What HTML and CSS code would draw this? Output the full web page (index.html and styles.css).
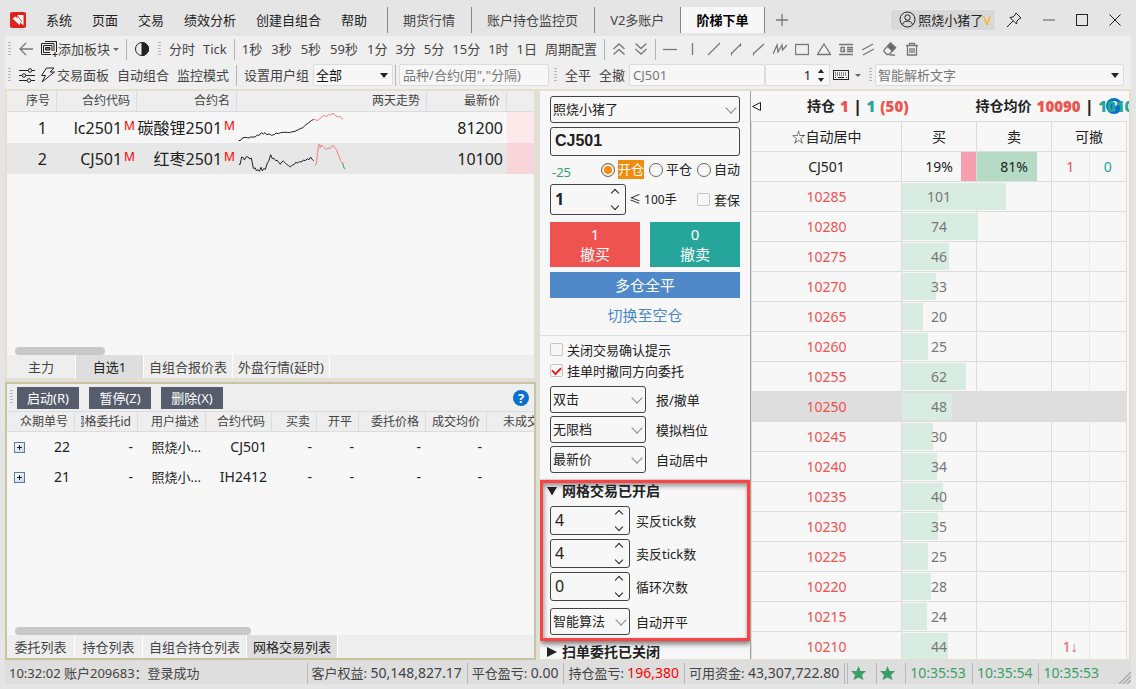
FILE: index.html
```html
<!DOCTYPE html>
<html lang="zh-CN">
<head>
<meta charset="utf-8">
<title>阶梯下单</title>
<link rel="stylesheet" href="styles.css">
</head>
<body>
<header class="titlebar">
  <svg class="logo" viewBox="0 0 16 16"><rect width="16" height="16" rx="2" fill="#e0221c"/><path d="M2.500 6.500L5.500 4.500L7.800 6.800L7 3H13.500V13.500L10.500 10.500L9.500 13z" fill="#fff"/><path d="M7 3L12 10" stroke="#e0221c" stroke-width=".8"/></svg>
  <nav class="menu">
    <button>系统</button><button>页面</button><button>交易</button><button>绩效分析</button><button>创建自组合</button><button>帮助</button>
  </nav>
  <nav class="pages">
    <button>期货行情</button><button>账户持仓监控页</button><button>V2多账户</button><button class="active">阶梯下单</button>
  </nav>
  <button class="icon-btn" aria-label="新增页面"><svg width="12" height="12" viewBox="0 0 12 12" class="line"><path d="M6 0V12M0 6H12"/></svg></button>
  <div class="win">
    <button class="user"><svg width="17" height="17" viewBox="0 0 17 17" class="line dark"><circle cx="8.500" cy="8.500" r="7.500"/><circle cx="8.500" cy="6.500" r="2.700"/><path d="M3.500 13.500C4.500 9 12.500 9 13.500 13.500"/></svg>照烧小猪了<b>V</b></button>
    <button class="icon-btn" aria-label="固定"><svg width="16" height="16" viewBox="0 0 16 16" class="line dark"><path d="M10 1L15 6L13 7L11 9L10.500 12L4 5.500L7 5L9 3zM7 9L1 15"/></svg></button>
    <button class="icon-btn" aria-label="最小化"><svg width="12" height="12" viewBox="0 0 12 12" class="line"><path d="M0 6H12"/></svg></button>
    <button class="icon-btn" aria-label="最大化"><svg width="12" height="12" viewBox="0 0 12 12" class="line dark"><rect x=".5" y=".5" width="11" height="11"/></svg></button>
    <button class="icon-btn" aria-label="关闭"><svg width="12" height="12" viewBox="0 0 12 12" class="line dark"><path d="M.5.5L11.500 11.500M11.500.5L.5 11.500"/></svg></button>
  </div>
</header>

<section class="toolbars">
  <div class="bar">
    <i class="grip"></i>
    <button aria-label="返回"><svg width="14" height="14" viewBox="0 0 14 14" class="line"><path d="M14 7H1M7 1L1 7L7 13"/></svg></button>
    <button class="with-icon"><svg width="17" height="16" viewBox="0 0 17 16" class="line dark"><path d="M4 .5H15.500V11M.5 13V2.500H13V10M.5 13.500H10M2.500 4.500H11V10M2.500 4.500V11.500H9M14 11V16M11.500 13.500H16.500"/><path d="M4.500 6.500H9V9H4.500z" fill="#777"/></svg>添加板块<span class="tri"></span></button>
    <i class="sep"></i>
    <button class="contrast" aria-label="切换主题"><svg width="14" height="14" viewBox="0 0 14 14" class="line dark"><circle cx="7" cy="7" r="6.500"/><path d="M7 .5A6.500 6.500 0 0 1 7 13.500z" fill="#222"/></svg></button>
    <i class="grip"></i>
    <button>分时</button><button>Tick</button>
    <i class="sep"></i>
    <div class="seconds"><button>1秒</button><button>3秒</button><button>5秒</button><button>59秒</button></div>
    <button>1分</button><button>3分</button><button>5分</button><button>15分</button><button>1时</button><button>1日</button><button>周期配置</button>
    <i class="sep"></i>
    <button aria-label="上移"><svg width="14" height="14" viewBox="0 0 14 14" class="line"><path d="M1.500 7L7 2L12.500 7M1.500 12.500L7 7.500L12.500 12.500"/></svg></button>
    <button aria-label="下移"><svg width="14" height="14" viewBox="0 0 14 14" class="line"><path d="M1.500 1.500L7 6.500L12.500 1.500M1.500 7L7 12L12.500 7"/></svg></button>
    <i class="sep"></i>
    <button aria-label="水平线"><svg width="14" height="14" viewBox="0 0 14 14" class="line"><path d="M0 7.500H14"/></svg></button>
    <button aria-label="垂直线"><svg width="14" height="14" viewBox="0 0 14 14" class="line"><path d="M7.500 1V13"/></svg></button>
    <button aria-label="直线"><svg width="14" height="14" viewBox="0 0 14 14" class="line"><path d="M1 13L13 1"/></svg></button>
    <button aria-label="线段"><svg width="14" height="14" viewBox="0 0 14 14" class="line"><path d="M2 12L12 2"/><path d="M2 12h1M11 3h1" stroke-width="3"/></svg></button>
    <button aria-label="射线"><svg width="14" height="14" viewBox="0 0 14 14" class="line"><path d="M2 12L13 2"/><path d="M2 12h1" stroke-width="3"/></svg></button>
    <button aria-label="波浪线"><svg width="14" height="14" viewBox="0 0 14 14" class="line"><path d="M0 12L4 3L5 10L9 3L9.500 8L14 3"/></svg></button>
    <button aria-label="矩形"><svg width="14" height="14" viewBox="0 0 14 14" class="line"><rect x=".5" y="2.500" width="13" height="10"/></svg></button>
    <button aria-label="三角形"><svg width="14" height="14" viewBox="0 0 14 14" class="line"><path d="M7 2L13.500 12.500H.5z"/></svg></button>
    <button aria-label="黄金分割"><svg width="14" height="14" viewBox="0 0 14 14" class="line"><path d="M0 2.500H14M0 12.500H14M8 5.500H14M8 7.500H14M8 9.500H14M6 5.500H2V9.500H5.500V7.500H4"/></svg></button>
    <button aria-label="平行线"><svg width="14" height="14" viewBox="0 0 14 14" class="line"><path d="M1 8L12 2M2 13L13 7"/></svg></button>
    <button aria-label="橡皮"><svg width="14" height="14" viewBox="0 0 14 14" class="line"><path d="M7.500 1L12.500 5.500L6 12.500H4L1 9.500V8zM7 13H12"/><path d="M7.500 1L12.500 5.500L9.500 9L4.500 4.500z" fill="#666"/></svg></button>
    <button aria-label="删除图形"><svg width="14" height="14" viewBox="0 0 14 14" class="line"><path d="M1 3.500H13M4.500 3V1.500H9.500V3M2.500 4V13H11.500V4M5 6V11M7 6V11M9 6V11"/></svg></button>
  </div>
  <div class="bar">
    <i class="grip"></i>
    <button class="tune" aria-label="设置"><svg width="16" height="15" viewBox="0 0 16 15" class="line dark"><path d="M0 2.500H9M13 2.500H16M0 7.500H3M7 7.500H16M0 12.500H8M12 12.500H16"/><circle cx="11" cy="2.500" r="1.800"/><circle cx="5" cy="7.500" r="1.800"/><circle cx="10" cy="12.500" r="1.800"/></svg></button>
    <button class="with-icon"><svg width="17" height="16" viewBox="0 0 17 16" class="line dark"><path d="M6.500 1H14L10 5H14.500L2 15L5.500 8.500H1.500z"/></svg>交易面板</button>
    <button>自动组合</button><button>监控模式</button>
    <i class="sep"></i>
    <label for="grp">设置用户组</label>
    <span class="flat-select group"><select id="grp"><option>全部</option></select></span>
    <i class="sep near"></i>
    <input class="flat search" aria-label="品种" placeholder='品种/合约(用","分隔)'>
    <i class="grip"></i>
    <button>全平</button><button>全撤</button>
    <div class="joined"><input class="flat code" aria-label="合约" placeholder="CJ501"><span class="flat qty"><input aria-label="数量" value="1"><span class="updown"><button aria-label="增加"></button><button aria-label="减少"></button></span></span></div>
    <button class="kbd" aria-label="键盘"><svg width="16" height="10" viewBox="0 0 16 10" class="line dark"><rect x=".5" y=".5" width="15" height="9"/><path d="M2 3H14M2 5H14" stroke-dasharray="1 1"/><path d="M2 7.500H3M5 7.500H11M13 7.500H14"/></svg><span class="tri"></span></button>
    <i class="grip"></i>
    <span class="flat-select smart"><select aria-label="智能解析"><option>智能解析文字</option></select></span>
  </div>
</section>

<main class="workspace">
  <div class="left">
    <section class="panel quotes">
      <table class="grid">
        <colgroup><col class="w50"><col class="w80"><col class="w100"><col class="w190"><col class="w80"><col></colgroup>
        <thead><tr><th>序号</th><th>合约代码</th><th>合约名</th><th>两天走势</th><th>最新价</th><th></th></tr></thead>
        <tbody>
          <tr><td class="idx">1</td><td class="mk">lc2501<sup>M</sup></td><td class="mk">碳酸锂2501<sup>M</sup></td>
            <td class="trend"><svg width="110" height="31" viewBox="711 72 330 93"><path class="k" d="M716 158L722 157L727 150L735 148L742 149L747 150L752 147L765 147L772 141L778 142L784 134L790 138L795 134L800 140L808 138L815 142L824 139L828 135L835 137L842 134L850 133L862 133L868 134L874 132L885 130L895 125L903 121L909 119L915 112L925 105L934 98L941 94"/><path class="r" d="M941 94L948 96L955 97L961 90L967 85L974 82L979 86L986 79L991 81L999 76L1005 80L1011 87L1018 85L1023 89L1029 94"/></svg></td>
            <td class="price">81200</td><td class="pink1"></td></tr>
          <tr class="alt"><td class="idx">2</td><td class="mk">CJ501<sup>M</sup></td><td class="mk">红枣2501<sup>M</sup></td>
            <td class="trend"><svg width="110" height="31" viewBox="711 165 330 93"><path class="k" d="M717 228L720 230L725 207L731 210L733 216L739 206L745 207L749 213L754 210L760 241L766 240L769 248L774 245L778 250L783 238L787 249L791 242L796 244L802 225L806 220L812 200L817 212L822 211L827 218L832 217L837 224L841 229L845 222L850 219L855 224L860 229L866 233L871 237L877 231L883 229L887 223L893 225L898 221L905 222L910 216L915 218L923 212L926 216L932 207L935 213L941 218"/><path class="r" d="M945 233L949 228L953 193L956 170L959 168L961 179L965 171L970 177L975 182L980 184L985 180L990 182L995 174L1000 173L1005 181L1009 184L1013 196L1018 207L1022 218L1027 225L1029 228"/><path class="g" d="M1028 225L1032 240L1036 242"/></svg></td>
            <td class="price">10100</td><td class="pink2"></td></tr>
        </tbody>
      </table>
      <div class="fill"></div>
      <div class="thumb short"></div>
      <nav class="tabs"><button class="wide">主力</button><button class="active mid">自选1</button><button>自组合报价表</button><button>外盘行情(延时)</button></nav>
    </section>

    <section class="panel orders">
      <div class="actions"><i class="grip"></i><button>启动(R)</button><button>暂停(Z)</button><button>删除(X)</button>
        <a class="help" href="#" aria-label="帮助">?</a></div>
      <table class="grid small">
        <colgroup><col class="w68"><col class="w63"><col class="w68"><col class="w66"><col class="w45"><col class="w42"><col class="w67"><col class="w61"><col></colgroup>
        <thead><tr><th>众期单号</th><th class="clip"><span>网格委托id</span></th><th>用户描述</th><th>合约代码</th><th>买卖</th><th>开平</th><th>委托价格</th><th>成交均价</th><th class="from-left">未成交</th></tr></thead>
        <tbody>
          <tr><td><span class="num"><button class="plus" aria-label="展开"></button>22</span></td><td>-</td><td class="desc">照烧小...</td><td class="sym">CJ501</td><td>-</td><td>-</td><td>-</td><td>-</td><td></td></tr>
          <tr><td><span class="num"><button class="plus" aria-label="展开"></button>21</span></td><td>-</td><td class="desc">照烧小...</td><td class="sym">IH2412</td><td>-</td><td>-</td><td>-</td><td>-</td><td></td></tr>
        </tbody>
      </table>
      <div class="fill"></div>
      <div class="thumb long"></div>
      <nav class="tabs lower"><button class="mid">委托列表</button><button class="mid">持仓列表</button><button>自组合持仓列表</button><button class="active">网格交易列表</button></nav>
    </section>
  </div>

  <section class="trade">
    <form class="entry">
      <div class="ticket">
        <span class="select"><select aria-label="账户"><option>照烧小猪了</option></select></span>
        <input class="box symbol" aria-label="合约代码" value="CJ501">
        <div class="mode"><span class="delta">-25</span>
          <label class="on"><input type="radio" name="oc" checked><span>开仓</span></label><label><input type="radio" name="oc"><span>平仓</span></label><label><input type="radio" name="oc"><span>自动</span></label></div>
        <div class="volume"><span class="box spin big"><input aria-label="手数" value="1"><span class="chev"><button type="button" aria-label="增加"></button><button type="button" aria-label="减少"></button></span></span><span class="limit">≤ 100手</span><label class="hedge"><input type="checkbox">套保</label></div>
        <div class="cancel"><button type="button" class="buy">1<br>撤买</button><button type="button" class="sell">0<br>撤卖</button></div>
        <button type="button" class="flatten">多仓全平</button>
        <a class="switch" href="#">切换至空仓</a>
      </div>
      <div class="options">
        <label class="check"><input type="checkbox">关闭交易确认提示</label>
        <label class="check"><input type="checkbox" checked>挂单时撤同方向委托</label>
        <div class="opt"><span class="select"><select id="o1"><option>双击</option></select></span><label for="o1">报/撤单</label></div>
        <div class="opt"><span class="select"><select id="o2"><option>无限档</option></select></span><label for="o2">模拟档位</label></div>
        <div class="opt"><span class="select"><select id="o3"><option>最新价</option></select></span><label for="o3">自动居中</label></div>
      </div>
      <div class="gridtrade">
        <button type="button" class="fold"><svg width="12" height="10" viewBox="0 0 12 10"><path d="M1 1H11L6 9.500z"/></svg>网格交易已开启</button>
        <div class="opt"><span class="box spin"><input id="g1" value="4"><span class="chev"><button type="button" aria-label="增加"></button><button type="button" aria-label="减少"></button></span></span><label for="g1">买反tick数</label></div>
        <div class="opt"><span class="box spin"><input id="g2" value="4"><span class="chev"><button type="button" aria-label="增加"></button><button type="button" aria-label="减少"></button></span></span><label for="g2">卖反tick数</label></div>
        <div class="opt"><span class="box spin"><input id="g3" value="0"><span class="chev"><button type="button" aria-label="增加"></button><button type="button" aria-label="减少"></button></span></span><label for="g3">循环次数</label></div>
        <div class="opt last"><span class="select"><select id="g4"><option>智能算法</option></select></span><label for="g4">自动开平</label></div>
      </div>
      <button type="button" class="fold closed"><svg width="12" height="12" viewBox="0 0 12 12"><path d="M1 1V11L11 6z"/></svg>扫单委托已关闭</button>
    </form>

    <div class="ladder">
      <div class="position">
        <button class="collapse" aria-label="收起"><svg width="9" height="9" viewBox="0 0 9 9" class="line dark"><path d="M8.500.5V8.500L.5 4.500z"/></svg></button>
        <span class="held">持仓 <b class="red">1</b> <b>|</b> <b class="teal">1</b> <b class="red">(50)</b></span>
        <a class="help" href="#" aria-label="帮助">?</a>
        <span class="avg">持仓均价 <b class="red">10090</b> <b>|</b> <b class="teal">10100</b></span>
      </div>
      <table class="book">
        <colgroup><col class="c40"><col class="c20"><col class="c20"><col class="c10"><col class="c10"></colgroup>
        <thead><tr><th>☆自动居中</th><th>买</th><th>卖</th><th colspan="2">可撤</th></tr></thead>
        <tbody>
          <tr class="total"><td>CJ501</td><td><i class="share short" style="width:20%"></i><span>19%</span></td><td><i class="share long" style="width:81%"></i><span>81%</span></td><td class="red">1</td><td class="teal">0</td></tr>
          <tr><td>10285</td><td><i class="vol" style="width:141%"></i><span>101</span></td><td></td><td></td><td></td></tr>
          <tr><td>10280</td><td><i class="vol" style="width:103%"></i><span>74</span></td><td></td><td></td><td></td></tr>
          <tr><td>10275</td><td><i class="vol" style="width:64%"></i><span>46</span></td><td></td><td></td><td></td></tr>
          <tr><td>10270</td><td><i class="vol" style="width:46%"></i><span>33</span></td><td></td><td></td><td></td></tr>
          <tr><td>10265</td><td><i class="vol" style="width:28%"></i><span>20</span></td><td></td><td></td><td></td></tr>
          <tr><td>10260</td><td><i class="vol" style="width:35%"></i><span>25</span></td><td></td><td></td><td></td></tr>
          <tr><td>10255</td><td><i class="vol" style="width:87%"></i><span>62</span></td><td></td><td></td><td></td></tr>
          <tr class="cur"><td>10250</td><td><i class="vol" style="width:67%"></i><span>48</span></td><td></td><td></td><td></td></tr>
          <tr><td>10245</td><td><i class="vol" style="width:42%"></i><span>30</span></td><td></td><td></td><td></td></tr>
          <tr><td>10240</td><td><i class="vol" style="width:47%"></i><span>34</span></td><td></td><td></td><td></td></tr>
          <tr><td>10235</td><td><i class="vol" style="width:56%"></i><span>40</span></td><td></td><td></td><td></td></tr>
          <tr><td>10230</td><td><i class="vol" style="width:49%"></i><span>35</span></td><td></td><td></td><td></td></tr>
          <tr><td>10225</td><td><i class="vol" style="width:35%"></i><span>25</span></td><td></td><td></td><td></td></tr>
          <tr><td>10220</td><td><i class="vol" style="width:39%"></i><span>28</span></td><td></td><td></td><td></td></tr>
          <tr><td>10215</td><td><i class="vol" style="width:34%"></i><span>24</span></td><td></td><td></td><td></td></tr>
          <tr><td>10210</td><td><i class="vol" style="width:62%"></i><span>44</span></td><td></td><td class="red mine">1↓</td><td></td></tr>
        </tbody>
      </table>
    </div>
  </section>
</main>

<footer class="status">
  <span class="log">10:32:02 账户209683：登录成功</span>
  <span>客户权益: <b>50,148,827.17</b></span>
  <span>平仓盈亏: <b>0.00</b></span>
  <span>持仓盈亏: <b class="gain">196,380</b></span>
  <span class="funds">可用资金: <b>43,307,722.80</b></span>
  <span class="star"><svg width="15" height="15" viewBox="0 0 15 15"><path d="M7.500 0L9.500 5H15L11 9L12.500 14L7.500 11.500L2.500 14L4 9L0 5H5.500z"/></svg></span>
  <span class="star"><svg width="15" height="15" viewBox="0 0 15 15"><path d="M7.500 0L9.500 5H15L11 9L12.500 14L7.500 11.500L2.500 14L4 9L0 5H5.500z"/></svg></span>
  <span class="time">10:35:53</span><span class="time">10:35:54</span><span class="time">10:35:53</span>
  <svg class="resize" width="12" height="12" viewBox="0 0 12 12"><path d="M0 12L12 0M4 12L12 4M8 12L12 8"/></svg>
</footer>
</body>
</html>
```
FILE: styles.css
```css
* { box-sizing: border-box; }
body {
  margin: 0;
  height: 100vh;
  padding: 0 5px 5px;
  display: flex;
  flex-direction: column;
  overflow: hidden;
  background: #e5e5e5;
  color: #222;
  font: 13px/20px "Noto Sans", "Noto Sans CJK SC", sans-serif;
}
button, input, select { font: inherit; color: inherit; margin: 0; }
button { border: 0; padding: 0; background: none; white-space: nowrap; }
input, select { border: 0; padding: 0; background: none; outline: 0; min-width: 0; }
select { appearance: none; width: 100%; height: 100%; }
a { text-decoration: none; }
svg { display: block; flex: none; }
.line { fill: none; stroke: #777; stroke-width: 1.3; }
.line.dark { stroke: #222; stroke-width: 1; }
.red { color: #ef5350; }
.teal { color: #26a69a; }

/* title bar */
.titlebar { display: flex; align-items: center; height: 36px; padding: 3px 10px 0 5px; flex: none; }
.logo { width: 16px; height: 16px; }
.menu { display: flex; gap: 20px; padding: 0 20px; }
.pages { display: flex; }
.pages button { height: 26px; padding: 0 16px 0 15px; border-left: 1px solid #888; color: #444; }
.pages .active { background: #f7f7f7; color: #000; font-weight: 700; border-right: 1px solid #888; }
.icon-btn { display: flex; align-items: center; justify-content: center; margin-left: 11px; }
.win { margin-left: auto; display: flex; align-items: center; gap: 21px; }
.win .icon-btn { margin: 0; }
.user { display: flex; align-items: center; height: 22px; padding: 0 4px 0 8px; gap: 2px; background: #d8d8d8; border: 1px solid #e9e9e9; border-radius: 4px; margin-right: -11px; }
.user b { color: #fbb40b; font-weight: 400; margin-left: -2px; }

/* toolbars */
.toolbars { flex: none; background: #efefef; padding-bottom: 1px; color: #444; }
.bar { display: flex; align-items: center; gap: 8px; height: 26px; padding: 0 7px 0 3px; }
.grip { width: 3px; height: 15px; flex: none; background: repeating-linear-gradient(#b5b5b5 0 1px, transparent 1px 3px); }
.sep { width: 1px; height: 21px; margin: 0 -1px; flex: none; background: #b4b4b4; }
.seconds { display: flex; gap: 9px; margin-right: 1px; }
.with-icon { display: flex; align-items: center; }
.with-icon .tri { margin-left: 3px; }
.contrast { margin: 0 1px; }
.tune { margin-right: -3px; }
.tri { border: 3px solid transparent; border-top: 3px solid #666; border-bottom: 0; }
.flat { height: 22px; background: #f7f7f7; border: 1px solid #dcdcdc; border-radius: 2px; padding: 0 3px; }
.flat::placeholder { color: #777; opacity: 1; }
.flat-select { position: relative; height: 22px; background: #f7f7f7; border: 1px solid #dcdcdc; border-radius: 2px; }
.flat-select select { padding-left: 2px; }
.flat-select::after { content: ""; position: absolute; right: 4px; top: 8px; border: 4px solid transparent; border-top: 5px solid #222; border-bottom: 0; }
.group { width: 80px; margin-left: -4px; color: #111; }
.sep.near { margin: 0 -5px 0 -6px; }
.search { width: 150px; margin-right: -3px; }
.joined { display: flex; margin-left: -4px; margin-right: -5px; }
.code { width: 136px; }
.qty { width: 65px; display: flex; align-items: center; color: #222; }
.qty input { width: 42px; text-align: right; }
.updown { display: grid; gap: 5px; margin-left: 7px; }
.updown button { border: 3px solid transparent; border-bottom: 4px solid #222; border-top: 0; }
.updown button + button { border-top: 4px solid #222; border-bottom: 0; }
.kbd { display: flex; align-items: center; gap: 6px; }
.smart { flex: 1; margin-left: -5px; color: #777; }

/* workspace */
.workspace { flex: 1; min-height: 0; display: flex; gap: 2px; background: #dedede; }
.left { flex: 531; min-width: 0; display: flex; flex-direction: column; gap: 2px; }
.panel { display: flex; flex-direction: column; min-height: 0; overflow: hidden; background: #f7f7f7; border: 2px solid #e3e1cd; }
.quotes { flex: 292; }
.orders { flex: 278; border-color: #c8c49c; }
.fill { flex: 1; }
.grid { width: 100%; table-layout: fixed; border-collapse: separate; border-spacing: 0; }
.grid th { height: 21px; padding: 0 6px 0 0; text-align: right; font-weight: 400; font-size: 12px; line-height: 18px; color: #444; background: #eee; border-right: 1px solid #dcdcdc; border-bottom: 1px solid #dcdcdc; overflow: hidden; white-space: nowrap; }
.grid th:last-child { border-right: 0; }
.grid td { height: 31px; padding: 0 4px 0 0; text-align: right; font-size: 16px; white-space: nowrap; }
.grid .idx { padding-right: 10px; }
.grid .mk { padding-right: 2px; }
.grid sup { font-size: 12px; line-height: 12px; margin-left: 2px; color: #f00; vertical-align: 4px; }
.grid .trend { padding: 0; }
.trend path { fill: none; stroke-width: 3; }
.trend .k { stroke: #222; }
.trend .r { stroke: #f47e7e; }
.trend .g { stroke: #3a9f66; }
.alt { background: #e7e7e7; }
.pink1 { background: #fce9ea; }
.pink2 { background: #f8d5d9; }
.w42 { width: 42px; } .w45 { width: 45px; } .w50 { width: 50px; } .w61 { width: 61px; } .w63 { width: 63px; } .w66 { width: 66px; } .w67 { width: 67px; } .w68 { width: 68px; }
.w80 { width: 80px; } .w100 { width: 100px; } .w190 { width: 190px; }
.thumb { height: 8px; margin-left: 8px; border-radius: 4px; background: #c8c8c8; flex: none; }
.thumb.short { width: 90px; }
.thumb.long { width: 236px; }
.tabs { display: flex; height: 23px; flex: none; background: #eee; color: #444; }
.tabs button { padding: 0 5px; border-right: 1px solid #fff; }
.tabs.lower button { padding: 0 6px; }
.tabs .wide { width: 69px; }
.tabs .mid { width: 68px; }
.tabs .active { background: #dedede; color: #222; }
.actions { display: flex; align-items: center; gap: 10px; height: 27px; padding: 0 5px 0 3px; background: #eee; flex: none; }
.actions .grip { margin-right: -6px; }
.actions button { width: 62px; height: 22px; background: #565c6c; color: #fff; }
.help { display: flex; align-items: center; justify-content: center; width: 16px; height: 16px; border-radius: 50%; background: #0b6fd0; color: #fff; font-weight: 700; line-height: 16px; }
.actions .help { margin-left: auto; }
.small thead th { border-top: 1px solid #dcdcdc; height: 21px; }
.small td { height: 30px; font-size: 14px; padding-right: 5px; }
.small .clip span { display: flex; justify-content: flex-end; margin-left: 6px; overflow: hidden; }
.small .from-left { text-align: left; padding: 0 0 0 16px; }
.small .sym { padding-right: 5px; }
.small .desc { font-size: 13px; }
.num { display: flex; align-items: center; justify-content: space-between; padding: 0 0 0 7px; }
.plus { width: 11px; height: 11px; border: 1px solid #5a7ba6; background: linear-gradient(#222, #222) center/5px 1px no-repeat, linear-gradient(#222, #222) center/1px 5px no-repeat, linear-gradient(135deg, #fff, #c8d4e8); }

/* order entry */
.trade { flex: 589; min-width: 0; display: flex; background: #f7f7f7; border: 2px solid #e3e1cd; border-bottom-width: 1px; overflow: hidden; }
.entry { width: 211px; flex: none; overflow: hidden; border-right: 1px solid #a0a0a0; }
.ticket { display: grid; padding: 5px 10px 9px; height: 245px; align-content: start; border-bottom: 1px solid #dcdcdc; }
.select { display: block; position: relative; height: 27px; border: 1px solid #444; border-radius: 3px; }
.select select { padding: 0 0 2px 2px; }
.select::after { content: ""; position: absolute; right: 4px; top: 7px; width: 7px; height: 7px; border: solid #888; border-width: 0 1px 1px 0; transform: rotate(45deg); }
.box { border: 1px solid #444; border-radius: 3px; }
.symbol { height: 29px; margin-top: 4px; padding: 0 4px 2px; font: 700 16px/20px "Liberation Sans", sans-serif; }
.mode { display: flex; align-items: center; height: 19px; margin-top: 4px; }
.mode .delta { color: #3a9f66; margin-right: auto; padding: 4px 0 0 2px; }
.mode label { display: flex; align-items: center; gap: 3px; margin-left: 5px; line-height: 19px; }
.mode input { appearance: none; width: 14px; height: 14px; border: 1px solid #666; border-radius: 50%; }
.mode input:checked { background: #f28c0f; box-shadow: inset 0 0 0 2px #f7f7f7; }
.mode .on span { background: #f28c0f; color: #fff; }
.volume { display: flex; align-items: center; margin-top: 5px; }
.spin { display: flex; align-items: center; width: 80px; height: 29px; padding: 0 7px 0 4px; }
.spin input { flex: 1; width: 20px; font-size: 16px; padding-bottom: 2px; }
.chev { display: grid; gap: 7px; }
.chev button { width: 6px; height: 6px; border: solid #222; border-width: 1px 0 0 1px; transform: rotate(45deg); }
.chev button + button { border-width: 0 1px 1px 0; }
.spin.big { width: 76px; height: 31px; }
.big input { font-size: 16px; font-weight: 700; }
.limit { margin-left: 3px; font-size: 12px; }
.hedge { margin-left: auto; }
.hedge, .check { display: flex; align-items: center; gap: 4px; }
.hedge input, .check input { appearance: none; width: 13px; height: 13px; border: 1px solid #c4c4c4; border-radius: 2px; display: grid; place-items: center; }
.check input:checked::before { content: ""; width: 7px; height: 4px; margin-bottom: 2px; border: solid #e0221c; border-width: 0 0 2px 2px; transform: rotate(-45deg); }
.cancel { display: grid; grid-template-columns: 1fr 1fr; gap: 10px; margin-top: 7px; font-size: 15px; color: #fff; }
.cancel button { height: 45px; padding-bottom: 2px; }
.buy { background: #ef5350; }
.sell { background: #26a69a; }
.flatten { height: 26px; margin-top: 5px; background: #4f89c9; color: #fff; font-size: 15px; }
.switch { justify-self: center; margin-top: 7px; font-size: 15px; color: #4a88cc; }
.options { padding: 3px 10px 6px; border-bottom: 1px solid #dcdcdc; }
.check { height: 21px; }
.opt { display: flex; align-items: center; gap: 10px; margin-top: 3px; }
.options .check + .opt { margin-top: 5px; }
.opt .select { width: 96px; }
.gridtrade { padding: 0 7px 3px; border: 3px solid #fb4343; box-shadow: 1px 3px 5px rgba(0, 0, 0, .5), inset 1px 3px 5px rgba(0, 0, 0, .4); }
.gridtrade .opt { gap: 6px; margin-top: 4px; }
.gridtrade .fold + .opt { margin-top: 7px; }
.gridtrade .select { width: 80px; }
.gridtrade .opt.last { margin-top: 7px; }
.fold { display: flex; align-items: center; gap: 4px; height: 18px; margin-left: -4px; font-size: 14px; font-weight: 700; }
.gridtrade .fold { height: 16px; }
.fold svg { width: 12px; fill: #222; }
.closed { margin: 2px 0 0 6px; }

/* price ladder */
.ladder { flex: 1; min-width: 0; padding-right: 2px; overflow: hidden; }
.position { position: relative; display: flex; align-items: center; height: 30px; margin-right: -2px; overflow: hidden; font-size: 14px; font-weight: 700; white-space: nowrap; }
.position b { font-size: 15px; }
.collapse { padding: 0 1px; }
.held, .avg { display: flex; gap: 5px; }
.held { margin-left: 45px; }
.avg { position: relative; margin-left: 67px; }
.position .help { position: absolute; right: 7px; top: 7px; }
.book { width: 100%; table-layout: fixed; border-collapse: separate; border-spacing: 0; border-left: 1px solid #dcdcdc; border-top: 1px solid #dcdcdc; font-size: 14px; text-align: center; }
.book th, .book td { position: static; height: 30px; padding: 0; font-weight: 400; border-right: 1px solid #dcdcdc; border-bottom: 1px solid #dcdcdc; }
.book td:nth-child(2), .book td:nth-child(3) { position: relative; }
.book td:nth-child(4) { border-right-color: #e9e9e9; }
.book td:first-child { color: #ef5350; }
.book td:nth-child(2) { color: #777; z-index: 1; }
.book .total td:first-child, .book .total td:nth-child(2), .book .total td:nth-child(3) { color: #222; }
.book .cur td { background: #dedede; border-color: #dedede; }
.book td span { position: relative; }
.book .mine { font-family: "Noto Sans", "Liberation Sans", sans-serif; }
.vol { position: absolute; left: 0; top: 1px; bottom: 1px; background: #d9ece1; }
.share { position: absolute; top: 0; bottom: 0; }
.share.short { right: 0; background: #f79fb0; }
.share.long { left: 0; background: #b5dbc7; }
.c40 { width: 40%; } .c20 { width: 20%; } .c10 { width: 10%; }

/* status bar */
.status { display: flex; align-items: center; height: 24px; padding-top: 2px; flex: none; background: #dedede; color: #444; white-space: nowrap; }
.status > span { height: 21px; padding: 0 5px 0 4px; border-left: 1px solid #b8b8b8; }
.status > .log { flex: 1; border-left: 0; }
.status > .funds { border-right: 1px solid #b8b8b8; margin-right: 2px; }
.status b { font-size: 14px; font-weight: 400; }
.status .gain { color: #f00; }
.status > .star { padding: 3px 10px 0 3px; }
.star svg { fill: #3a9f66; }
.status > .time { padding: 0 6px 0 4px; font-size: 14px; color: #3a9f66; }
.resize { fill: none; stroke: #aaa; stroke-width: 1.5; align-self: flex-end; margin-left: 14px; }
```
